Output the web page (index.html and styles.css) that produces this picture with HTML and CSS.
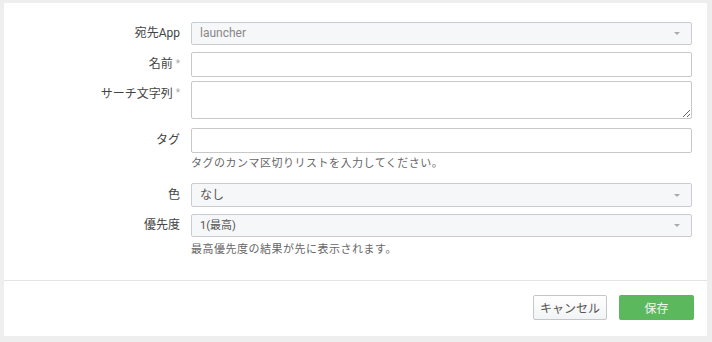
FILE: index.html
```html
<!DOCTYPE html>
<html lang="ja">
<head>
    <meta charset="UTF-8">
    <title>サーチの作成</title>
    <link rel="stylesheet" href="styles.css">
</head>
<body>
    <div class="panel">
        <div class="form-body">
            <div class="row row-app">
                <label class="label">宛先App</label>
                <div class="control">
                    <div class="select select-muted">launcher</div>
                </div>
            </div>
            <div class="row row-name">
                <label class="label">名前<span class="req">*</span></label>
                <div class="control">
                    <input type="text" class="text-input">
                </div>
            </div>
            <div class="row row-search">
                <label class="label">サーチ文字列<span class="req">*</span></label>
                <div class="control">
                    <textarea class="text-area"></textarea>
                </div>
            </div>
            <div class="row row-tags">
                <label class="label">タグ</label>
                <div class="control">
                    <input type="text" class="text-input">
                    <div class="help">タグのカンマ区切りリストを入力してください。</div>
                </div>
            </div>
            <div class="row row-color">
                <label class="label">色</label>
                <div class="control">
                    <div class="select select-tall">なし</div>
                </div>
            </div>
            <div class="row row-priority">
                <label class="label">優先度</label>
                <div class="control">
                    <div class="select select-small">1(最高)</div>
                    <div class="help help-gap">最高優先度の結果が先に表示されます。</div>
                </div>
            </div>
        </div>
        <div class="footer">
            <button class="btn btn-cancel">キャンセル</button>
            <button class="btn btn-save">保存</button>
        </div>
    </div>
</body>
</html>
```

FILE: styles.css
```css
* {
    margin: 0;
    padding: 0;
    box-sizing: border-box;
}

body {
    font-family: Roboto, "Noto Sans CJK JP", sans-serif;
    font-size: 12px;
    background-color: #eeeeee;
    color: #444;
}

.panel {
    width: 703px;
    height: 333px;
    margin: 3px 0 0 4px;
    background: white;
    display: flex;
    flex-direction: column;
}

.form-body {
    padding: 19px 15px 0 0;
    height: 278px;
    border-bottom: 1px solid #e4e4e4;
}

.row {
    display: flex;
    gap: 11px;
}

.label {
    width: 176px;
    flex: none;
    text-align: right;
    line-height: 23px;
    color: #444;
    white-space: nowrap;
}

.req {
    color: #aaa;
    font-size: 10px;
    margin-left: 3px;
    vertical-align: top;
    position: relative;
    top: -1px;
}

.control {
    flex: 1;
}

.row-app { margin-bottom: 7px; }
.row-name { margin-bottom: 4px; }
.row-search { margin-bottom: 9px; }
.row-tags { margin-bottom: 10px; }
.row-color { margin-bottom: 7px; }

.row-name .label,
.row-tags .label {
    line-height: 25px;
}

.row-search .label {
    line-height: 26px;
}

.row-color .label {
    line-height: 24px;
}

.select {
    position: relative;
    height: 23px;
    line-height: 21px;
    padding-left: 8px;
    border: 1px solid #c9cdd2;
    border-radius: 2px;
    background: #f6f7f8;
    color: #555;
    font-size: 12px;
}

.select::after {
    content: "";
    position: absolute;
    right: 11px;
    top: 9px;
    border-left: 3px solid transparent;
    border-right: 3px solid transparent;
    border-top: 3px solid #aaa;
}

.select-muted {
    color: #888;
}

.select-tall {
    height: 24px;
    line-height: 22px;
}

.select-tall::after {
    top: 10px;
}

.select-small {
    font-size: 11px;
}

.text-input {
    display: block;
    width: 100%;
    height: 25px;
    border: 1px solid #c8c8c8;
    border-radius: 2px;
    background: white;
    outline: none;
    padding: 0 8px;
    font-family: inherit;
    font-size: 12px;
}

.text-area {
    display: block;
    width: 100%;
    height: 38px;
    border: 1px solid #c8c8c8;
    border-radius: 2px;
    outline: none;
    padding: 4px 8px;
    font-family: inherit;
    font-size: 12px;
    resize: vertical;
}

.help {
    margin-top: 2px;
    color: #666;
    font-size: 11px;
    line-height: 18px;
    letter-spacing: 0.5px;
}

.help-gap {
    margin-top: 4px;
}

.footer {
    flex: 1;
    display: flex;
    justify-content: flex-end;
    align-items: flex-start;
    gap: 12px;
    padding: 14px 13px 0 0;
}

.btn {
    height: 25px;
    border-radius: 2px;
    font-family: inherit;
    font-size: 12px;
    cursor: pointer;
}

.btn-cancel {
    width: 74px;
    border: 1px solid #c3c6ca;
    background: linear-gradient(#ffffff, #f2f3f4);
    color: #555;
}

.btn-save {
    width: 75px;
    border: none;
    background: #5cb85c;
    color: #eef8ee;
}
```
